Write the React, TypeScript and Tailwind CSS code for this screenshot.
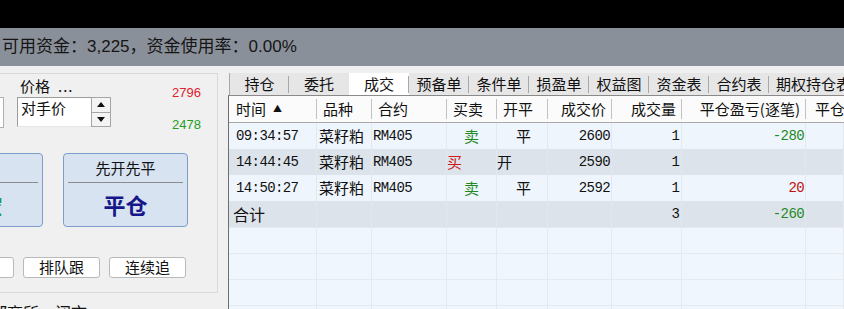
import React from 'react';

const cjk = '"Noto Sans CJK SC", "Noto Sans", sans-serif';
const mono = '"Liberation Mono", "Noto Sans CJK SC", monospace';

const tabs = ['持仓', '委托', '成交', '预备单', '条件单', '损盈单', '权益图', '资金表', '合约表', '期权持仓表'];

type Row = {
  time: string;
  name: string;
  code: string;
  side: string;
  open: string;
  price: string;
  qty: string;
  pnl: string;
  pnlColor?: string;
};

const rows: Row[] = [
  { time: '09:34:57', name: '菜籽粕', code: 'RM405', side: '卖', open: '平', price: '2600', qty: '1', pnl: '-280', pnlColor: 'text-[#1f8a1f]' },
  { time: '14:44:45', name: '菜籽粕', code: 'RM405', side: '买', open: '开', price: '2590', qty: '1', pnl: '' },
  { time: '14:50:27', name: '菜籽粕', code: 'RM405', side: '卖', open: '平', price: '2592', qty: '1', pnl: '20', pnlColor: 'text-[#c01010]' },
];

const gridCols = 'grid grid-cols-[88px_55px_75px_50px_51px_64px_70px_124px_1fr]';
const cell = 'border-r border-[#e3e8ee] h-full flex items-center overflow-hidden whitespace-nowrap';

const BigButton: React.FC<{ top: string; main: string; mainColor: string; className?: string }> = ({ top, main, mainColor, className }) => (
  <div className={`w-[125px] h-[74px] shrink-0 rounded-[4px] border border-[#7d9ec8] bg-[#d7e3f1] flex flex-col items-center ${className ?? ''}`}>
    <div className="h-[28px] flex items-center text-[15px] text-[#111]" style={{ fontFamily: cjk }}>{top}</div>
    <div className="w-[115px] h-px bg-[#8c8c8c]" />
    <div className={`flex-1 flex items-center text-[22px] font-bold ${mainColor}`} style={{ fontFamily: cjk }}>{main}</div>
  </div>
);

const SmallButton: React.FC<{ label: string; className?: string }> = ({ label, className }) => (
  <div className={`w-[77px] h-[21px] shrink-0 rounded-[3px] border border-[#b9b9b9] bg-white flex items-center justify-center text-[15px] text-[#111] ${className ?? ''}`} style={{ fontFamily: cjk }}>
    {label}
  </div>
);

export default function App() {
  return (
    <div className="w-[844px] h-[309px] overflow-hidden bg-[#f0f0f0] flex flex-col" style={{ fontFamily: cjk }}>
      <div className="h-[28px] bg-black shrink-0" />
      <div
        className="h-[38px] bg-[#8a9099] shrink-0 flex items-center pl-[2px] text-[17px] text-[#151515]"
        style={{ fontFamily: '"Liberation Sans", "Noto Sans CJK SC", sans-serif' }}
      >
        可用资金：3,225，资金使用率：0.00%
      </div>

      <div className="flex flex-1 pt-[7px] min-h-0">
        {/* left order panel */}
        <div className="w-[218px] shrink-0 flex flex-col">
          <div className="h-[220px] border-t border-r border-b border-[#d9d9d9] flex flex-col overflow-hidden shrink-0">
            <div className="h-[56px] flex shrink-0">
              <div className="w-[4px] h-[31px] mt-[23px] border border-l-0 border-[#b0b0b0] bg-white shrink-0" />
              <div className="ml-[13px] flex flex-col">
                <div className="h-[20px] mt-[2px] flex items-center text-[15px] text-[#111] pl-[3px]">
                  价格 <span className="ml-[8px] tracking-[1px]">...</span>
                </div>
                <div className="flex mt-[1px]">
                  <div className="w-[74px] h-[30px] border-t border-l border-[#9c9c9c] border-b border-b-[#e6e6e6] bg-white text-[15px] text-[#111] pl-[3px] leading-[20px]">
                    对手价
                  </div>
                  <div className="w-[20px] h-[30px] flex flex-col border border-[#a6a6a6] bg-[#f4f4f4]">
                    <div className="flex-1 flex items-center justify-center border-b border-[#a6a6a6]">
                      <svg width="8" height="5" viewBox="0 0 8 5"><path d="M0 5 L4 0 L8 5 Z" fill="#111" /></svg>
                    </div>
                    <div className="flex-1 flex items-center justify-center">
                      <svg width="8" height="5" viewBox="0 0 8 5"><path d="M0 0 L4 5 L8 0 Z" fill="#111" /></svg>
                    </div>
                  </div>
                </div>
              </div>
              <div className="ml-[61px] flex flex-col text-[13px]" style={{ fontFamily: '"Liberation Sans", sans-serif' }}>
                <div className="mt-[11px] h-[16px] leading-[16px] text-[#e0202a]">2796</div>
                <div className="mt-[16px] h-[16px] leading-[16px] text-[#22a022]">2478</div>
              </div>
            </div>

            <div className="flex mt-[23px] -ml-[82px] gap-[20px]">
              <BigButton top="2478" main="卖空" mainColor="text-[#1a9a3a]" />
              <BigButton top="先开先平" main="平仓" mainColor="text-[#16168a]" />
            </div>

            <div className="flex mt-[30px] -ml-[63px] gap-[9px]">
              <SmallButton label="追价" />
              <SmallButton label="排队跟" />
              <SmallButton label="连续追" />
            </div>
          </div>
          <div className="-ml-[9px] mt-[9px] text-[16px] leading-[20px] text-[#111] whitespace-nowrap">郑商所，闭市</div>
        </div>

        {/* right data panel */}
        <div className="ml-[10px] flex-1 flex flex-col min-w-0">
          <div className="h-[22px] flex pl-[1px] shrink-0">
            {tabs.map((t, i) => (
              <div
                key={t}
                className={`${i === tabs.length - 1 ? 'flex-1 justify-start pl-[7px]' : 'w-[60px] justify-center'} shrink-0 h-full flex items-center text-[15px] text-[#111] whitespace-nowrap relative ${i === 2 ? 'bg-white' : 'bg-[#e6e6e6]'} ${i === 0 ? 'border-l border-[#a8a8a8]' : ''}`}
              >
                {t}
                {i < tabs.length - 1 && i !== 1 && (
                  <span className="absolute right-0 top-[3px] bottom-[2px] w-px bg-[#a8a8a8]" />
                )}
              </div>
            ))}
          </div>

          <div className="flex-1 border-l border-t border-l-[#6e6e6e] border-t-[#8a8a8a] bg-[#f0f6fd] flex flex-col">
            {/* header */}
            <div className={`${gridCols} h-[27px] bg-[#fbfbfb] border-b border-[#a8a8a8] text-[15px] text-[#111] shrink-0`}>
              {[
                { t: '时间', a: 'pl-[7px]' },
                { t: '品种', a: 'pl-[6px]' },
                { t: '合约', a: 'pl-[6px]' },
                { t: '买卖', a: 'pl-[6px]' },
                { t: '开平', a: 'pl-[6px]' },
                { t: '成交价', a: 'justify-end pr-[6px]' },
                { t: '成交量', a: 'justify-end pr-[6px]' },
                { t: '平仓盈亏(逐笔)', a: 'justify-end pr-[6px]' },
                { t: '平仓盈亏(盯市)', a: 'pl-[9px]' },
              ].map((h, i) => (
                <div key={h.t} className={`h-full flex items-center whitespace-nowrap overflow-hidden relative ${h.a}`}>
                  {h.t}
                  {i === 0 && <span className="ml-[7px] text-[9px]">▲</span>}
                  {i < 8 && <span className="absolute right-0 top-[3px] bottom-[3px] w-px bg-[#c2c2c2]" />}
                </div>
              ))}
            </div>

            {rows.map((r, i) => (
              <div key={r.time} className={`${gridCols} h-[26px] text-[#111] shrink-0 ${i % 2 === 0 ? 'bg-[#eef5fc]' : 'bg-[#dde3eb]'}`}>
                <div className={`${cell} pl-[7px] text-[14px] tracking-[-0.6px]`} style={{ fontFamily: mono }}>{r.time}</div>
                <div className={`${cell} pl-[2px] text-[15px]`}>{r.name}</div>
                <div className={`${cell} pl-[1px] text-[14px] tracking-[-0.6px]`} style={{ fontFamily: mono }}>{r.code}</div>
                <div className={`${cell} text-[15px] ${r.side === '卖' ? 'pl-[17px] text-[#1f8a1f]' : 'text-[#d01818]'}`}>{r.side}</div>
                <div className={`${cell} text-[15px] ${r.open === '平' ? 'pl-[19px]' : ''}`}>{r.open}</div>
                <div className={`${cell} justify-end pr-[1px] text-[14px] tracking-[-0.6px]`} style={{ fontFamily: mono }}>{r.price}</div>
                <div className={`${cell} justify-end pr-[1px] text-[14px]`} style={{ fontFamily: mono }}>{r.qty}</div>
                <div className={`${cell} justify-end pr-[1px] text-[14px] tracking-[-0.6px] ${r.pnlColor ?? ''}`} style={{ fontFamily: mono }}>{r.pnl}</div>
                <div className={cell} />
              </div>
            ))}

            <div className={`${gridCols} h-[26px] bg-[#dde3eb] text-[#111] shrink-0`}>
              <div className={`${cell} pl-[4px] text-[16px]`}>合计</div>
              <div className={cell} />
              <div className={cell} />
              <div className={cell} />
              <div className={cell} />
              <div className={cell} />
              <div className={`${cell} justify-end pr-[1px] text-[14px]`} style={{ fontFamily: mono }}>3</div>
              <div className={`${cell} justify-end pr-[1px] text-[14px] tracking-[-0.6px] text-[#1f8a1f]`} style={{ fontFamily: mono }}>-260</div>
              <div className={cell} />
            </div>

            {[0, 1, 2, 3].map(k => (
              <div key={k} className={`${gridCols} h-[26px] border-t border-[#e6e9ee] shrink-0`}>
                {Array.from({ length: 9 }, (_, j) => (
                  <div key={j} className="border-r border-[#e6e9ee] h-full" />
                ))}
              </div>
            ))}
          </div>
        </div>
      </div>
    </div>
  );
}
